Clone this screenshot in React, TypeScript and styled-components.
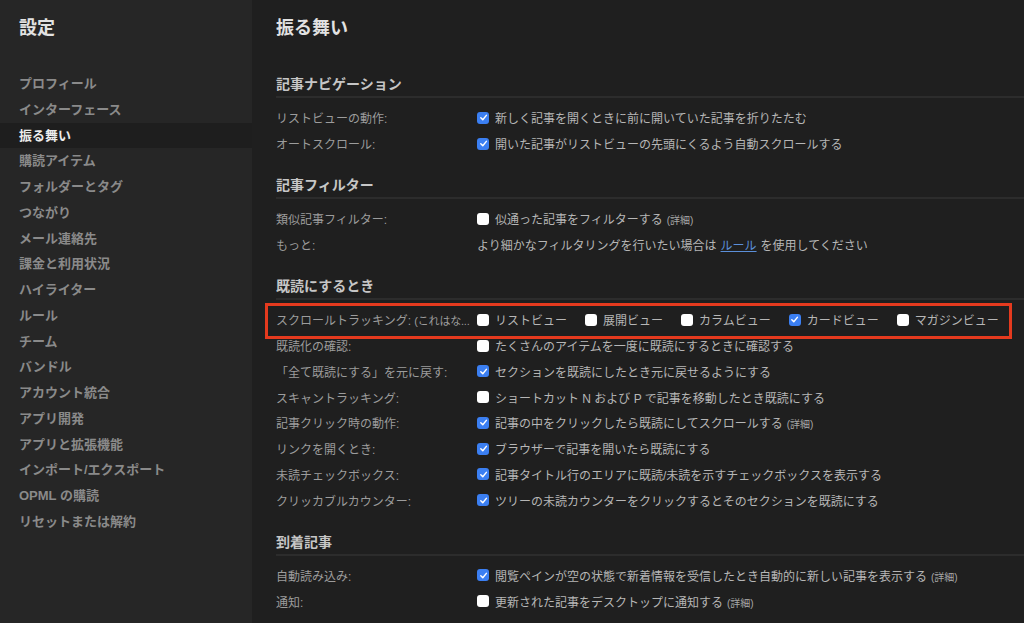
import React from "react";
import styled, { createGlobalStyle } from "styled-components";

const Global = createGlobalStyle`
  html, body { margin: 0; padding: 0; background: #1f1f1f; overflow: hidden; }
  body { font-family: "Liberation Sans", "Noto Sans CJK JP", sans-serif; }
  #root { height: 623px; }
`;

const Page = styled.div`
  display: flex;
  width: 1024px;
  height: 623px;
  overflow: hidden;
`;

const Sidebar = styled.aside`
  width: 252px;
  flex-shrink: 0;
  background: #262626;
  padding-top: 16px;
  box-sizing: border-box;
`;

const SideTitle = styled.h1`
  margin: 0 0 31px 19px;
  font-size: 18px;
  line-height: 24px;
  font-weight: 700;
  color: #e2e2e2;
`;

const NavList = styled.nav`
  display: flex;
  flex-direction: column;
`;

const NavItem = styled.div<{ $active?: boolean }>`
  height: 25.75px;
  line-height: 25.75px;
  padding-left: 19px;
  font-size: 13px;
  font-weight: 700;
  color: ${(p) => (p.$active ? "#ececec" : "#8a8a8a")};
  background: ${(p) => (p.$active ? "#1e1e1e" : "transparent")};
  white-space: nowrap;
`;

const Main = styled.main`
  flex: 1;
  padding: 16px 0 0 24px;
  box-sizing: border-box;
  min-width: 0;
`;

const PageTitle = styled.h2`
  margin: 0 0 34px;
  font-size: 18px;
  line-height: 24px;
  font-weight: 700;
  color: #e2e2e2;
`;

const Section = styled.section`
  margin-bottom: 18.5px;
`;

const SectionHeader = styled.h3`
  margin: 0 0 7px;
  padding-bottom: 2px;
  font-size: 14px;
  line-height: 20px;
  font-weight: 700;
  color: #c6c6c6;
  border-bottom: 2px solid #2c2c2c;
`;

const Row = styled.div<{ $highlight?: boolean }>`
  position: relative;
  display: flex;
  align-items: center;
  height: 25.75px;
  font-size: 12px;
  white-space: nowrap;
  ${(p) =>
    p.$highlight
      ? `&::after {
    content: "";
    position: absolute;
    left: -11px;
    right: 12px;
    top: -4px;
    bottom: -6px;
    border: 3px solid #e53a1e;
    pointer-events: none;
  }`
      : ""}
`;

const Label = styled.div`
  width: 201px;
  flex-shrink: 0;
  padding-right: 6px;
  box-sizing: border-box;
  color: #9c9c9c;
`;

const LabelNote = styled.span`
  font-size: 11px;
  letter-spacing: -0.2px;
`;

const Control = styled.label<{ $compact?: boolean }>`
  display: flex;
  align-items: center;
  gap: 6px;
  color: #b6b6b6;
  margin-right: ${(p) => (p.$compact ? "18px" : "20px")};
`;

const PlainText = styled.div`
  color: #b6b6b6;
`;

const Box = styled.span<{ $checked?: boolean }>`
  display: inline-flex;
  align-items: center;
  justify-content: center;
  width: 12px;
  height: 12px;
  border-radius: 3px;
  background: ${(p) => (p.$checked ? "#3b7ff2" : "#ffffff")};
  flex-shrink: 0;
`;

const Detail = styled.span`
  font-size: 10px;
  color: #a8a8a8;
  margin-left: 4px;
`;

const Link = styled.a`
  color: #5b8fd9;
  text-decoration: underline;
  margin: 0 4px;
`;

const Checkbox = ({ checked }: { checked?: boolean }) => (
  <Box $checked={checked}>
    {checked && (
      <svg width="9" height="9" viewBox="0 0 10 10">
        <path d="M2 5.3 L4.2 7.5 L8.2 2.6" fill="none" stroke="#fff" strokeWidth="1.6" strokeLinecap="round" strokeLinejoin="round" />
      </svg>
    )}
  </Box>
);

const navItems = [
  "プロフィール",
  "インターフェース",
  "振る舞い",
  "購読アイテム",
  "フォルダーとタグ",
  "つながり",
  "メール連絡先",
  "課金と利用状況",
  "ハイライター",
  "ルール",
  "チーム",
  "バンドル",
  "アカウント統合",
  "アプリ開発",
  "アプリと拡張機能",
  "インポート/エクスポート",
  "OPML の購読",
  "リセットまたは解約",
];

type Item = { label: string; text: string; checked: boolean; detail?: boolean };

const CheckRow = ({ label, text, checked, detail }: Item) => (
  <Row>
    <Label>{label}</Label>
    <Control>
      <Checkbox checked={checked} />
      <span>
        {text}
        {detail && <Detail>(詳細)</Detail>}
      </span>
    </Control>
  </Row>
);

const readItems: Item[] = [
  { label: "既読化の確認:", text: "たくさんのアイテムを一度に既読にするときに確認する", checked: false },
  { label: "「全て既読にする」を元に戻す:", text: "セクションを既読にしたとき元に戻せるようにする", checked: true },
  { label: "スキャントラッキング:", text: "ショートカット N および P で記事を移動したとき既読にする", checked: false },
  { label: "記事クリック時の動作:", text: "記事の中をクリックしたら既読にしてスクロールする", checked: true, detail: true },
  { label: "リンクを開くとき:", text: "ブラウザーで記事を開いたら既読にする", checked: true },
  { label: "未読チェックボックス:", text: "記事タイトル行のエリアに既読/未読を示すチェックボックスを表示する", checked: true },
  { label: "クリッカブルカウンター:", text: "ツリーの未読カウンターをクリックするとそのセクションを既読にする", checked: true },
];

const views = [
  { name: "リストビュー", checked: false },
  { name: "展開ビュー", checked: false },
  { name: "カラムビュー", checked: false },
  { name: "カードビュー", checked: true },
  { name: "マガジンビュー", checked: false },
];

export default function App() {
  return (
    <Page>
      <Global />
      <Sidebar>
        <SideTitle>設定</SideTitle>
        <NavList>
          {navItems.map((n) => (
            <NavItem key={n} $active={n === "振る舞い"}>
              {n}
            </NavItem>
          ))}
        </NavList>
      </Sidebar>
      <Main>
        <PageTitle>振る舞い</PageTitle>

        <Section>
          <SectionHeader>記事ナビゲーション</SectionHeader>
          <CheckRow label="リストビューの動作:" text="新しく記事を開くときに前に開いていた記事を折りたたむ" checked />
          <CheckRow label="オートスクロール:" text="開いた記事がリストビューの先頭にくるよう自動スクロールする" checked />
        </Section>

        <Section>
          <SectionHeader>記事フィルター</SectionHeader>
          <CheckRow label="類似記事フィルター:" text="似通った記事をフィルターする" checked={false} detail />
          <Row>
            <Label>もっと:</Label>
            <PlainText>
              より細かなフィルタリングを行いたい場合は<Link>ルール</Link>を使用してください
            </PlainText>
          </Row>
        </Section>

        <Section>
          <SectionHeader>既読にするとき</SectionHeader>
          <Row $highlight>
            <Label>
              スクロールトラッキング: <LabelNote>(これはな...</LabelNote>
            </Label>
            {views.map((v) => (
              <Control key={v.name} $compact>
                <Checkbox checked={v.checked} />
                <span>{v.name}</span>
              </Control>
            ))}
          </Row>
          {readItems.map((it) => (
            <CheckRow key={it.label} {...it} />
          ))}
        </Section>

        <Section>
          <SectionHeader>到着記事</SectionHeader>
          <CheckRow label="自動読み込み:" text="閲覧ペインが空の状態で新着情報を受信したとき自動的に新しい記事を表示する" checked detail />
          <CheckRow label="通知:" text="更新された記事をデスクトップに通知する" checked={false} detail />
        </Section>
      </Main>
    </Page>
  );
}
